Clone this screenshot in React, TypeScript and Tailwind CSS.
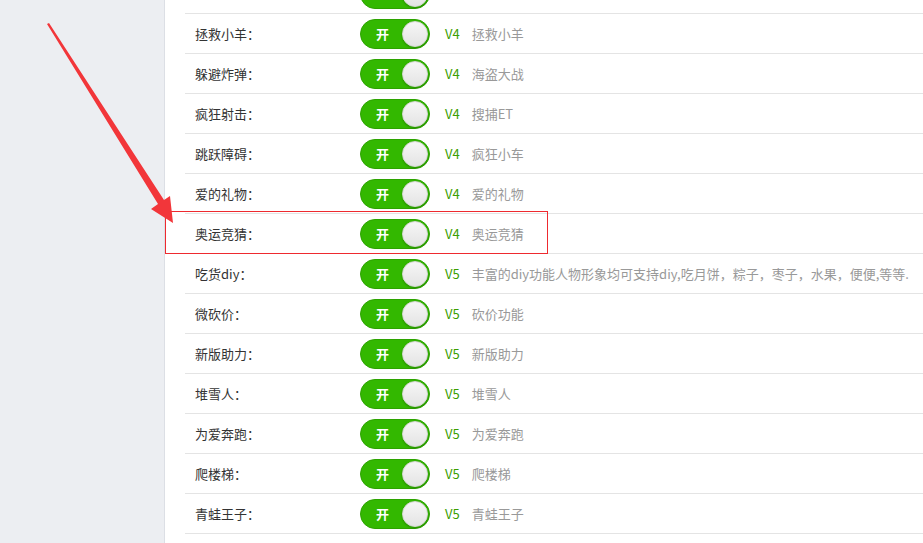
const rows = [
  { name: "", v: "", desc: "" },
  { name: "拯救小羊：", v: "V4", desc: "拯救小羊" },
  { name: "躲避炸弹：", v: "V4", desc: "海盗大战" },
  { name: "疯狂射击：", v: "V4", desc: "搜捕ET" },
  { name: "跳跃障碍：", v: "V4", desc: "疯狂小车" },
  { name: "爱的礼物：", v: "V4", desc: "爱的礼物" },
  { name: "奥运竞猜：", v: "V4", desc: "奥运竞猜" },
  { name: "吃货diy：", v: "V5", desc: "丰富的diy功能人物形象均可支持diy,吃月饼，粽子，枣子，水果，便便,等等." },
  { name: "微砍价：", v: "V5", desc: "砍价功能" },
  { name: "新版助力：", v: "V5", desc: "新版助力" },
  { name: "堆雪人：", v: "V5", desc: "堆雪人" },
  { name: "为爱奔跑：", v: "V5", desc: "为爱奔跑" },
  { name: "爬楼梯：", v: "V5", desc: "爬楼梯" },
  { name: "青蛙王子：", v: "V5", desc: "青蛙王子" },
];

const Toggle = ({ label }: { label: string }) => {
  return (
    <div className="relative w-[70px] h-[30px] rounded-full bg-[#33b800] border border-[#2da300] flex items-center">
      <span className="ml-[15px] text-white font-bold text-[13px] leading-none">{label}</span>
      <div className="absolute right-[1px] top-[1px] w-[26px] h-[26px] rounded-full bg-gradient-to-b from-[#f6f6f6] to-[#e4e4e4] border border-[#d8d8d8] shadow-[0_1px_2px_rgba(0,0,0,0.25)]"></div>
    </div>
  );
};

const App = () => {
  return (
    <div
      className="relative w-[923px] h-[543px] overflow-hidden flex bg-white"
      style={{ fontFamily: '"Microsoft YaHei", "Noto Sans CJK SC", "Liberation Sans", sans-serif' }}
    >
      <div className="w-[165px] h-full bg-[#eceef2] border-r border-[#dcdfe5] shrink-0"></div>
      <div className="flex-1 pl-[20px]">
        <div className="mt-[-26px]">
          {rows.map((r, i) => (
            <div key={i} className="h-[40px] border-b border-[#e4e4e4] flex items-center pl-[10px] text-[13px]">
              <div className="w-[165px] text-[#333]">{r.name}</div>
              <Toggle label={i === 0 ? "" : "开"} />
              <span className="ml-[15px] text-[#3a9e00]">{r.v}</span>
              <span className="ml-[12px] text-[#999]">{r.desc}</span>
            </div>
          ))}
        </div>
      </div>
      <svg className="absolute left-0 top-0" width="923" height="543" viewBox="0 0 923 543">
        <rect x="165.5" y="211.5" width="382" height="42" fill="none" stroke="#ee2a2f" strokeWidth="1" />
        <polygon points="47,24 49,23 164,200 170,196 173,223 151,209 158,204" fill="#f2363a" />
      </svg>
    </div>
  );
};

export default App;
